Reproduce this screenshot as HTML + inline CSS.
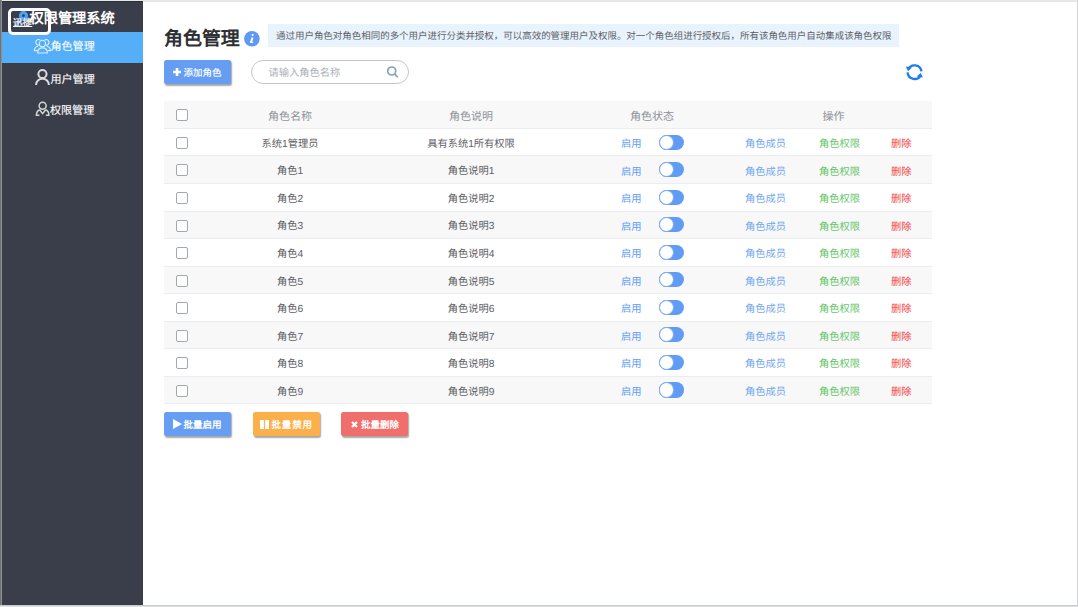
<!DOCTYPE html>
<html lang="zh-CN"><head><meta charset="utf-8">
<style>
html,body{margin:0;padding:0;}
body{width:1078px;height:607px;position:relative;overflow:hidden;background:#fff;font-family:"Liberation Sans",sans-serif;text-rendering:geometricPrecision;}
div{position:absolute;box-sizing:border-box;}
.t{white-space:nowrap;line-height:20px;height:20px;}
.c{white-space:nowrap;line-height:20px;height:20px;width:200px;text-align:center;}
.fr-top{left:0;top:0;width:1078px;height:1px;background:#e7e8e8;}
.fr-top2{left:143px;top:1px;width:935px;height:1px;background:#e9e5e5;}
.fr-l0{left:0;top:0;width:1px;height:607px;background:#6e7175;}
.fr-l1{left:1px;top:0;width:1px;height:607px;background:#8d9195;}
.fr-r{left:1077px;top:0;width:1px;height:607px;background:#d2d6d9;}
.fr-b0{left:0;top:605px;width:1078px;height:1px;background:#c9cacd;}
.fr-b1{left:0;top:606px;width:1078px;height:1px;background:#dee1e4;}
.side{left:2px;top:1px;width:141px;height:604px;background:#3a3e4a;}
.side-top{left:2px;top:1px;width:141px;height:1px;background:#2a3036;}
.active{left:2px;top:32px;width:141px;height:31px;background:#54aef8;}
.brand{left:29.5px;top:7.8px;font-size:14.2px;font-weight:bold;color:#fff;line-height:22px;}
.mi{font-size:11.05px;color:#fff;line-height:20px;-webkit-text-stroke:0.12px #fff;}
.title{left:164px;top:28px;font-size:18.95px;font-weight:bold;color:#2f3033;line-height:24px;}
.info{left:244px;top:31px;width:15.5px;height:15.5px;border-radius:50%;background:#5b9bf0;}
.desc{left:268px;top:24px;width:631px;height:23px;background:#e8f3fd;}
.desct{left:276px;top:26px;font-size:9.47px;color:#5c6066;line-height:21px;}
.btn{height:23.5px;width:67px;border-radius:2.5px;box-shadow:1px 1.5px 1.5px rgba(0,0,0,.35);color:#fff;}
.search{left:250.5px;top:60px;width:158px;height:24px;border:1px solid #c3c7cd;border-radius:12px;}
.ph{left:268.5px;top:64.2px;font-size:10.26px;color:#abafb5;line-height:20px;}
.row{left:164px;width:768px;height:27.5px;}
.rline{left:164px;width:768px;height:1px;background:#ecedf0;}
.cb{left:176px;width:12px;height:12px;border:1px solid #a1a8b2;border-radius:2px;background:#fff;}
.hd{font-size:11.05px;color:#8f9297;}
.bd{font-size:10.26px;color:#5d6065;}
.on{font-size:10.26px;color:#62a0f5;}
.l1{font-size:10.26px;color:#72a8ee;}
.l2{font-size:10.26px;color:#66c668;}
.l3{font-size:10.26px;color:#f4423f;}
.sw{left:658.5px;width:25.5px;height:15.2px;border-radius:7.6px;background:#619cf4;}
.sw i{position:absolute;left:0;top:0;width:15.2px;height:15.2px;border-radius:50%;background:#fff;box-sizing:border-box;border:0.9px solid #76a6f3;}
.bb{top:413.5px;font-weight:bold;font-size:9.47px;line-height:24px;}
</style></head><body>
<div class="side"></div>
<div class="side-top"></div>
<div class="active"></div>
<div style="left:8px;top:7.8px;width:43.2px;height:27.6px;border:3.2px solid #fff;border-radius:5px;"></div>
<svg style="position:absolute;left:12px;top:9.7px" width="20" height="20" viewBox="0 0 20 20">
<path d="M8.2 9.2L3 14.5L5.5 15.5L10.5 10.2z" fill="#4aa3f5"/>
<circle cx="11.5" cy="5.7" r="3" fill="none" stroke="#4aa3f5" stroke-width="3.2"/>
</svg>
<div class="t" style="left:13px;top:17.5px;font-size:9.6px;line-height:11px;color:#f2f4f8;font-weight:normal;-webkit-text-stroke:0.3px #f2f4f8;text-decoration:underline;text-decoration-thickness:0.7px;text-underline-offset:0px;">迅捷</div>
<div class="t brand">权限管理系统</div>

<svg style="position:absolute;left:30px;top:35px" width="25" height="22" viewBox="0 0 25 22" fill="none" stroke="#dceefd" stroke-width="1.1">
<ellipse cx="12.4" cy="8.6" rx="3.05" ry="3.3"/>
<path d="M7.7 18C7.7 14.6 9.8 12.9 12.5 12.9S17.3 14.6 17.3 18z"/>
<path d="M10.2 5A2.8 2.8 0 1 0 9.2 10"/>
<path d="M14.6 5A2.8 2.8 0 1 1 15.6 10"/>
<path d="M7.9 11.3C5.6 11.9 4.4 13.4 4.4 15.6H7.7"/>
<path d="M16.9 11.3C19.2 11.9 20.4 13.4 20.4 15.6H17.3"/>
</svg>
<div class="t mi" style="left:50.5px;top:37px;">角色管理</div>
<svg style="position:absolute;left:30px;top:66px" width="25" height="24" viewBox="0 0 25 24" fill="none" stroke="#dcdcdd" stroke-width="2">
<circle cx="12.45" cy="8" r="4.1"/><path d="M6 19c0-3.6 2.9-6.2 6.45-6.2S18.9 15.4 18.9 19"/>
</svg>
<div class="t mi" style="left:50.5px;top:69.8px;">用户管理</div>
<svg style="position:absolute;left:30px;top:97px" width="25" height="24" viewBox="0 0 25 24" fill="none" stroke="#d6d6d8" stroke-width="1.5">
<circle cx="12.65" cy="8.7" r="3.5"/>
<path d="M9.6 12.8C7.4 13.6 6.4 15.6 6.4 18.3H9.4 M15.7 12.8C17.9 13.6 18.9 15.6 18.9 18.3H15.9 M9.6 12.8L12.6 16.6L15.7 12.8"/>
</svg>
<div class="t mi" style="left:50px;top:100.5px;">权限管理</div>

<div class="t title">角色管理</div>
<svg style="position:absolute;left:244px;top:30.6px" width="16" height="16" viewBox="0 0 16 16">
<circle cx="7.9" cy="7.8" r="7.8" fill="#5e9af1"/>
<circle cx="8.6" cy="3.9" r="1.05" fill="#fff"/>
<path d="M7.5 6.6H9.4L8.3 11.1Q8.2 11.5 8.7 11.3L9.3 11L9.1 11.9H6.4Q5.8 11.9 6 11.3z" fill="#fff"/>
</svg>
<div class="desc"></div>
<div class="t desct">通过用户角色对角色相同的多个用户进行分类并授权，可以高效的管理用户及权限。对一个角色组进行授权后，所有该角色用户自动集成该角色权限</div>

<div class="btn" style="left:164px;top:60px;background:#659df3;"></div>
<svg style="position:absolute;left:173px;top:67.5px" width="8" height="8" viewBox="0 0 8 8"><path d="M4 0v8M0 4h8" stroke="#fff" stroke-width="2.6"/></svg>
<div class="t" style="left:183.5px;top:63.5px;font-size:9.47px;color:#fff;line-height:20px;font-weight:500;-webkit-text-stroke:0.15px #fff;">添加角色</div>
<div class="search"></div>
<div class="t ph">请输入角色名称</div>
<svg style="position:absolute;left:386px;top:66px" width="13" height="13" viewBox="0 0 13 13" fill="none" stroke="#8ba0b5" stroke-width="1.7">
<circle cx="5.7" cy="5" r="4"/><path d="M8.6 7.9l3.1 3.4"/>
</svg>
<svg style="position:absolute;left:900px;top:58px" width="28" height="28" viewBox="0 0 28 28" fill="none" stroke="#1b7df2" stroke-width="2.3">
<path d="M8.2 11.2A7 7 0 0 1 21.4 13.4"/>
<path d="M7.6 14.4A7 7 0 0 0 20.9 17"/>
<path d="M5.8 8.6L12 9.4L8 13.2z" fill="#1b7df2" stroke="none"/>
<path d="M22.9 19.6L16.7 18.6L20.7 15z" fill="#1b7df2" stroke="none"/>
</svg>

<div class="row" style="top:101.00px;background:#f8f8f8"></div>
<div class="row" style="top:128.54px;background:#ffffff"></div>
<div class="row" style="top:156.08px;background:#f8f8f8"></div>
<div class="row" style="top:183.62px;background:#ffffff"></div>
<div class="row" style="top:211.16px;background:#f8f8f8"></div>
<div class="row" style="top:238.70px;background:#ffffff"></div>
<div class="row" style="top:266.24px;background:#f8f8f8"></div>
<div class="row" style="top:293.78px;background:#ffffff"></div>
<div class="row" style="top:321.32px;background:#f8f8f8"></div>
<div class="row" style="top:348.86px;background:#ffffff"></div>
<div class="row" style="top:376.40px;background:#f8f8f8"></div>
<div class="rline" style="top:127.94px"></div>
<div class="rline" style="top:155.48px"></div>
<div class="rline" style="top:183.02px"></div>
<div class="rline" style="top:210.56px"></div>
<div class="rline" style="top:238.10px"></div>
<div class="rline" style="top:265.64px"></div>
<div class="rline" style="top:293.18px"></div>
<div class="rline" style="top:320.72px"></div>
<div class="rline" style="top:348.26px"></div>
<div class="rline" style="top:375.80px"></div>
<div class="rline" style="top:403.34px"></div>
<div class="cb" style="top:109.37px"></div>
<div class="c hd" style="left:190px;top:106.77px">角色名称</div>
<div class="c hd" style="left:371px;top:106.77px">角色说明</div>
<div class="c hd" style="left:552px;top:106.77px">角色状态</div>
<div class="c hd" style="left:733.5px;top:106.77px">操作</div>
<div class="cb" style="top:136.91px"></div>
<div class="c bd" style="left:190px;top:134.81px">系统1管理员</div>
<div class="c bd" style="left:371px;top:134.81px">具有系统1所有权限</div>
<div class="t on" style="left:621px;top:135.01px">启用</div>
<div class="sw" style="top:134.51px"><i></i></div>
<div class="t l1" style="left:745px;top:135.01px">角色成员</div>
<div class="t l2" style="left:819px;top:135.01px">角色权限</div>
<div class="t l3" style="left:891px;top:135.01px">删除</div>
<div class="cb" style="top:164.45px"></div>
<div class="c bd" style="left:190px;top:162.35px">角色1</div>
<div class="c bd" style="left:371px;top:162.35px">角色说明1</div>
<div class="t on" style="left:621px;top:162.55px">启用</div>
<div class="sw" style="top:162.05px"><i></i></div>
<div class="t l1" style="left:745px;top:162.55px">角色成员</div>
<div class="t l2" style="left:819px;top:162.55px">角色权限</div>
<div class="t l3" style="left:891px;top:162.55px">删除</div>
<div class="cb" style="top:191.99px"></div>
<div class="c bd" style="left:190px;top:189.89px">角色2</div>
<div class="c bd" style="left:371px;top:189.89px">角色说明2</div>
<div class="t on" style="left:621px;top:190.09px">启用</div>
<div class="sw" style="top:189.59px"><i></i></div>
<div class="t l1" style="left:745px;top:190.09px">角色成员</div>
<div class="t l2" style="left:819px;top:190.09px">角色权限</div>
<div class="t l3" style="left:891px;top:190.09px">删除</div>
<div class="cb" style="top:219.53px"></div>
<div class="c bd" style="left:190px;top:217.43px">角色3</div>
<div class="c bd" style="left:371px;top:217.43px">角色说明3</div>
<div class="t on" style="left:621px;top:217.63px">启用</div>
<div class="sw" style="top:217.13px"><i></i></div>
<div class="t l1" style="left:745px;top:217.63px">角色成员</div>
<div class="t l2" style="left:819px;top:217.63px">角色权限</div>
<div class="t l3" style="left:891px;top:217.63px">删除</div>
<div class="cb" style="top:247.07px"></div>
<div class="c bd" style="left:190px;top:244.97px">角色4</div>
<div class="c bd" style="left:371px;top:244.97px">角色说明4</div>
<div class="t on" style="left:621px;top:245.17px">启用</div>
<div class="sw" style="top:244.67px"><i></i></div>
<div class="t l1" style="left:745px;top:245.17px">角色成员</div>
<div class="t l2" style="left:819px;top:245.17px">角色权限</div>
<div class="t l3" style="left:891px;top:245.17px">删除</div>
<div class="cb" style="top:274.61px"></div>
<div class="c bd" style="left:190px;top:272.51px">角色5</div>
<div class="c bd" style="left:371px;top:272.51px">角色说明5</div>
<div class="t on" style="left:621px;top:272.71px">启用</div>
<div class="sw" style="top:272.21px"><i></i></div>
<div class="t l1" style="left:745px;top:272.71px">角色成员</div>
<div class="t l2" style="left:819px;top:272.71px">角色权限</div>
<div class="t l3" style="left:891px;top:272.71px">删除</div>
<div class="cb" style="top:302.15px"></div>
<div class="c bd" style="left:190px;top:300.05px">角色6</div>
<div class="c bd" style="left:371px;top:300.05px">角色说明6</div>
<div class="t on" style="left:621px;top:300.25px">启用</div>
<div class="sw" style="top:299.75px"><i></i></div>
<div class="t l1" style="left:745px;top:300.25px">角色成员</div>
<div class="t l2" style="left:819px;top:300.25px">角色权限</div>
<div class="t l3" style="left:891px;top:300.25px">删除</div>
<div class="cb" style="top:329.69px"></div>
<div class="c bd" style="left:190px;top:327.59px">角色7</div>
<div class="c bd" style="left:371px;top:327.59px">角色说明7</div>
<div class="t on" style="left:621px;top:327.79px">启用</div>
<div class="sw" style="top:327.29px"><i></i></div>
<div class="t l1" style="left:745px;top:327.79px">角色成员</div>
<div class="t l2" style="left:819px;top:327.79px">角色权限</div>
<div class="t l3" style="left:891px;top:327.79px">删除</div>
<div class="cb" style="top:357.23px"></div>
<div class="c bd" style="left:190px;top:355.13px">角色8</div>
<div class="c bd" style="left:371px;top:355.13px">角色说明8</div>
<div class="t on" style="left:621px;top:355.33px">启用</div>
<div class="sw" style="top:354.83px"><i></i></div>
<div class="t l1" style="left:745px;top:355.33px">角色成员</div>
<div class="t l2" style="left:819px;top:355.33px">角色权限</div>
<div class="t l3" style="left:891px;top:355.33px">删除</div>
<div class="cb" style="top:384.77px"></div>
<div class="c bd" style="left:190px;top:382.67px">角色9</div>
<div class="c bd" style="left:371px;top:382.67px">角色说明9</div>
<div class="t on" style="left:621px;top:382.87px">启用</div>
<div class="sw" style="top:382.37px"><i></i></div>
<div class="t l1" style="left:745px;top:382.87px">角色成员</div>
<div class="t l2" style="left:819px;top:382.87px">角色权限</div>
<div class="t l3" style="left:891px;top:382.87px">删除</div>

<div class="btn" style="left:164px;top:412px;background:#669ef3;"></div>
<svg style="position:absolute;left:172.5px;top:419px" width="9" height="10" viewBox="0 0 9 10"><path d="M0 0L9 5L0 10z" fill="#fff"/></svg>
<div class="t bb" style="left:183.5px;color:#fff;">批量启用</div>
<div class="btn" style="left:253px;top:412px;background:#fbb04b;"></div>
<svg style="position:absolute;left:259.7px;top:420px" width="9.5" height="9" viewBox="0 0 9.5 9"><rect x="0" y="0" width="3.9" height="9" fill="#fff"/><rect x="5" y="0" width="4" height="9" fill="#fff"/></svg>
<div class="t bb" style="left:271.5px;color:#fff;letter-spacing:0.85px;">批量禁用</div>
<div class="btn" style="left:341px;top:412px;background:#f06e6b;"></div>
<svg style="position:absolute;left:351px;top:421.3px" width="7" height="7" viewBox="0 0 7 7"><path d="M1 1L6 6M6 1L1 6" stroke="#fff" stroke-width="2.3"/></svg>
<div class="t bb" style="left:361px;color:#fff;">批量删除</div>

<div class="fr-top"></div>
<div class="fr-top2"></div>
<div class="fr-l0"></div>
<div class="fr-l1"></div>
<div class="fr-r"></div>
<div class="fr-b0"></div>
<div class="fr-b1"></div>
</body></html>
